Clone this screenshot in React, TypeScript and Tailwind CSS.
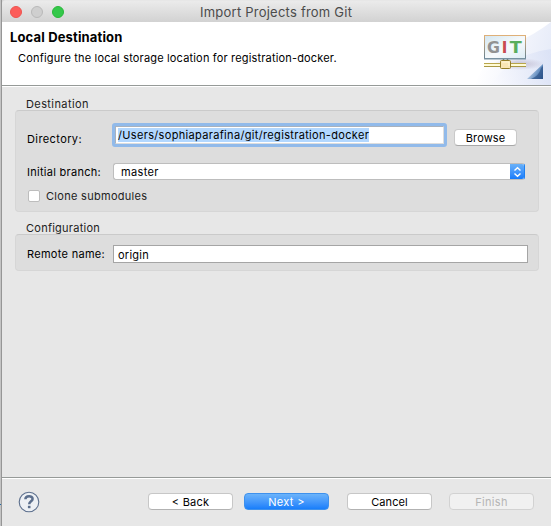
import type { ReactNode } from 'react';

function TitleBar() {
  return (
    <div className="relative flex h-[21px] shrink-0 items-center rounded-tl-[4px] bg-linear-to-b from-[#ebebeb] to-[#d2d2d2] pl-[8px]">
      <div className="flex gap-[9px]">
        <span className="size-[12px] rounded-full border border-[#ee534f] bg-[#fc5d5a]" />
        <span className="size-[12px] rounded-full border border-[#b9b9b9] bg-[#cfcfcf]" />
        <span className="size-[12px] rounded-full border border-[#29b83a] bg-[#34c84a]" />
      </div>
      <span className="ml-[136px] pt-px text-[13px] leading-[20px] tracking-[0.23px] text-[#4b4b4b]">Import Projects from Git</span>
    </div>
  );
}

function GitBanner() {
  return (
    <svg width="76" height="63" viewBox="475 22 76 63">
      <defs>
        <linearGradient id="sky" gradientUnits="userSpaceOnUse" x1="482" y1="50" x2="551" y2="66">
          <stop offset="0" stopColor="#ffffff" />
          <stop offset="0.5" stopColor="#f3f5fc" />
          <stop offset="1" stopColor="#e6ebf8" />
        </linearGradient>
        <linearGradient id="wave" gradientUnits="userSpaceOnUse" x1="495" y1="80" x2="551" y2="60">
          <stop offset="0" stopColor="#f8f9fe" />
          <stop offset="1" stopColor="#d7dff5" />
        </linearGradient>
        <linearGradient id="frame" x1="0" y1="0" x2="0" y2="1">
          <stop offset="0" stopColor="#dfb078" />
          <stop offset="1" stopColor="#648091" />
        </linearGradient>
        <linearGradient id="screen" x1="0" y1="0" x2="1" y2="1">
          <stop offset="0" stopColor="#d3e6f1" />
          <stop offset="0.55" stopColor="#f7fafc" />
          <stop offset="1" stopColor="#dcebf4" />
        </linearGradient>
        <linearGradient id="corner" gradientUnits="userSpaceOnUse" x1="531" y1="70" x2="543" y2="77">
          <stop offset="0" stopColor="#b9cde6" />
          <stop offset="0.5" stopColor="#6c94c4" />
          <stop offset="1" stopColor="#3c659e" />
        </linearGradient>
        <radialGradient id="shade">
          <stop offset="0" stopColor="#aaa0b8" stopOpacity="0.6" />
          <stop offset="1" stopColor="#aaa0b8" stopOpacity="0" />
        </radialGradient>
      </defs>
      <path d="M475 85Q483 58 515 43Q534 35 551 22V85Z" fill="url(#sky)" />
      <path d="M491 85Q510 54 551 49V85Z" fill="url(#wave)" opacity=".7" />
      <ellipse cx="519" cy="64" rx="26" ry="6" fill="url(#shade)" />
      <rect x="484.5" y="35.5" width="41" height="23" fill="url(#screen)" stroke="url(#frame)" />
      <path d="M484 58.8H526" stroke="#7891a1" strokeWidth="1.4" />
      <g fontFamily="'DejaVu Sans', sans-serif" fontSize="15" fontWeight="700">
        <text x="487" y="53" textLength="13" lengthAdjust="spacingAndGlyphs" fill="#929292">G</text>
        <text x="501.8" y="53" fill="#c94b50">I</text>
        <text x="509.8" y="53" textLength="12" lengthAdjust="spacingAndGlyphs" fill="#5aad5d">T</text>
      </g>
      <path d="M503.5 59V62M507.5 59V62" stroke="#718279" strokeWidth="1.5" />
      <path d="M484 63.5H526M484 66.5H526" stroke="#b8a54b" />
      <path d="M484 65H526" stroke="#fffbd5" strokeWidth="2" />
      <path d="M484 66.5H526" stroke="#a99845" />
      <rect x="500.5" y="60.5" width="10" height="8" rx="1" fill="#f9e6b4" stroke="#957e28" />
      <path d="M502 62H509V66" stroke="#fff8db" fill="none" />
      <path d="M527 79L543 64V79Z" fill="url(#corner)" />
      <path d="M531 79Q539 76 541 68L543 66V79Z" fill="#23497f" opacity=".6" />
    </svg>
  );
}

function Header() {
  return (
    <header className="flex h-[64px] shrink-0 justify-between border-b border-[#969a98] bg-white">
      <div className="pl-[8px] pt-[5px]">
        <h1 className="text-[13px] leading-[20px] font-bold tracking-[0.15px]">Local Destination</h1>
        <p className="pl-[8px] pt-px text-[11px] leading-[20px] tracking-[0.17px]">Configure the local storage location for registration-docker.</p>
      </div>
      <GitBanner />
    </header>
  );
}

function Button({ className, children }: { className: string; children: ReactNode }) {
  return (
    <button className={`flex h-[17px] shrink-0 items-center justify-center rounded-[4px] text-[11px] ${className}`}>
      {children}
    </button>
  );
}

function Footer() {
  return (
    <footer className="flex h-[49px] shrink-0 items-center border-t border-[#969a98] pb-px pl-[16px] shadow-[inset_0_1px_0_#fff]">
      <svg width="22" height="22" viewBox="0 0 22 22" fill="none" stroke="#5c6f8d">
        <circle cx="11" cy="11" r="9.8" strokeWidth="1.1" fill="#edf0f4" />
        <path d="M7.4 8.3C7.4 4.3 14.6 4.2 14.6 8C14.6 10.3 11.2 10.4 11.2 13.3" strokeWidth="2.5" />
        <path d="M11.2 14.8V17.2" strokeWidth="2.6" />
      </svg>
      <div className="ml-[108px] flex">
        <Button className="w-[85px] border border-[#c7c7c7] border-b-[#b2b2b2] bg-white pt-px tracking-[0.2px]">&lt; Back</Button>
        <Button className="ml-[11px] w-[85px] border border-[#3e91ed] bg-linear-to-b from-[#6bb3fa] to-[#167efb] pt-px tracking-[0.3px] text-white">Next &gt;</Button>
        <Button className="ml-[18px] w-[85px] border border-[#c7c7c7] border-b-[#b2b2b2] bg-white pt-px tracking-[0.1px]">Cancel</Button>
        <Button className="ml-[17px] w-[85px] border border-[#d2d2d2] bg-[#f1f1f1] pt-px tracking-[0.3px] text-[#b5b5b5]">Finish</Button>
      </div>
    </footer>
  );
}

export default function App() {
  return (
    <div className="flex h-[526px] w-[551px] overflow-hidden bg-[#d8d8d8] font-['Inter',sans-serif] text-[11px] text-black">
      <div className="w-[2px] shrink-0 border-r border-[#969696] bg-[#c4c4c4] pt-[504px]">
        <div className="h-px bg-[#246ca8]" />
      </div>
      <div className="flex min-w-0 flex-1 flex-col rounded-tl-[4px] bg-[#e7e7e7] pt-px">
        <TitleBar />
        <Header />
        <main className="flex flex-1 flex-col border-t border-white pl-[13px] pt-[9px]">
          <h2 className="h-[14px] pl-[11px] leading-[16px] tracking-[0.4px] text-[#222]">Destination</h2>
          <section className="h-[102px] w-[524px] rounded-[4px] border border-[#d6d6d6] border-t-[#cacaca] bg-[#dddddd] pl-[11px] pt-[12px]">
            <div className="flex h-[24px]">
              <label className="w-[85px] pt-[8px] leading-[16px] tracking-[0.4px]">Directory:</label>
              <div className="h-[24px] w-[335px] rounded-[3px] border-[3px] border-[#91baea] bg-white">
                <div className="flex h-[18px] border border-[#a9b2bd] border-r-[#dddddd] border-b-[#dddddd] pl-[2px] pt-px">
                  <span className="h-[14px] bg-[#b2d7fe] leading-[15px] tracking-[0.33px]">/Users/sophiaparafina/git/registration-docker</span>
                </div>
              </div>
              <div className="ml-[7px] pt-[6px]">
                <Button className="w-[63px] border border-[#c9c9c9] border-b-[#a8a8a8] bg-white pt-px tracking-[0.1px]">Browse</Button>
              </div>
            </div>
            <div className="mt-[16px] flex h-[17px]">
              <label className="w-[86px] pt-px leading-[16px] tracking-[0.28px]">Initial branch:</label>
              <div className="flex w-[412px] justify-between overflow-hidden rounded-[3px] border border-[#bdbdbd] border-r-[#1d80f2] bg-white pl-[7px]">
                <span className="leading-[16px] tracking-[0.35px]">master</span>
                <span className="flex w-[14px] items-center justify-center bg-linear-to-b from-[#69b1f9] to-[#147bfb]">
                  <svg width="9" height="12" viewBox="0 0 9 12" fill="none" stroke="white" strokeWidth="1.4">
                    <path d="M1.5 4.5L4.5 1.7L7.5 4.5M1.5 7.5L4.5 10.3L7.5 7.5" />
                  </svg>
                </span>
              </div>
            </div>
            <div className="mt-[9px] flex h-[14px] items-center pl-px">
              <span className="size-[12px] rounded-[2px] border border-[#bdbdbd] bg-white" />
              <label className="ml-[6px] leading-[14px] tracking-[0.29px] text-[#222]">Clone submodules</label>
            </div>
          </section>
          <h2 className="mt-[7px] h-[15px] pl-[11px] leading-[18px] tracking-[0.25px] text-[#222]">Configuration</h2>
          <section className="flex h-[37px] w-[524px] rounded-[4px] border border-[#d6d6d6] border-t-[#cacaca] bg-[#dddddd] pl-[11px] pt-[10px]">
            <label className="w-[86px] leading-[18px] tracking-[0.3px]">Remote name:</label>
            <div className="h-[18px] w-[415px] border border-[#a5a5a5] bg-white pl-[4px] leading-[18px] tracking-[0.25px]">origin</div>
          </section>
        </main>
        <Footer />
      </div>
    </div>
  );
}
